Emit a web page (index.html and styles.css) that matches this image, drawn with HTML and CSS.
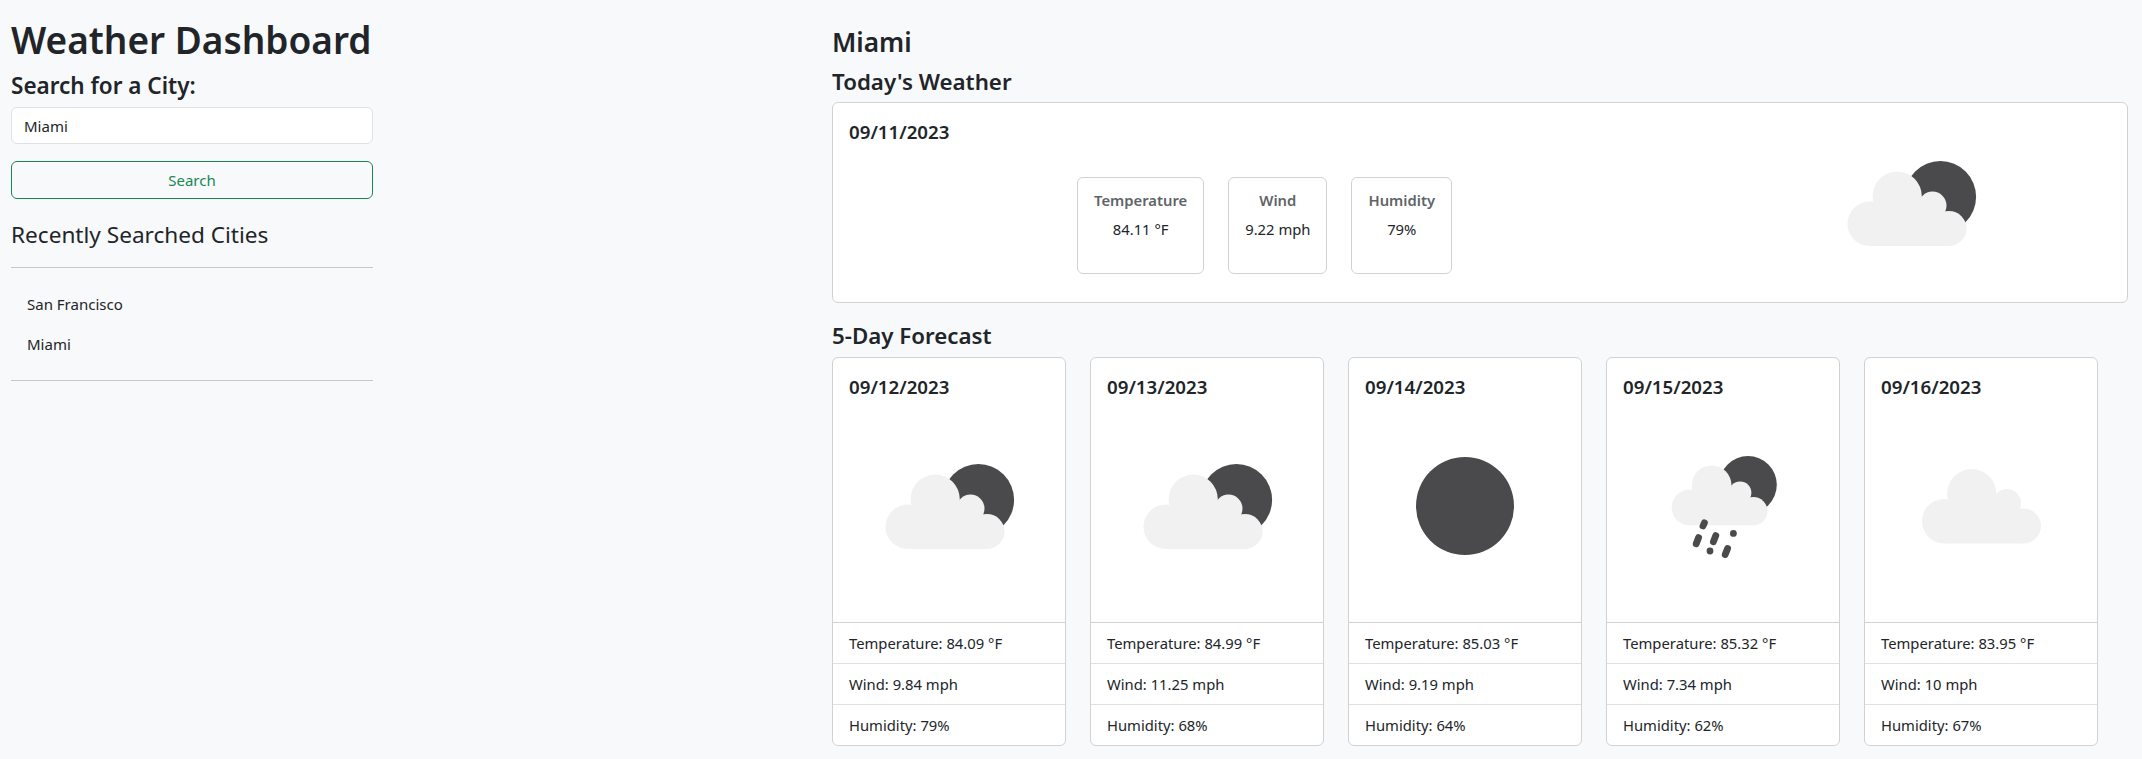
FILE: index.html
```html
<!DOCTYPE html>
<html lang="en">
<head>
<meta charset="utf-8">
<title>Weather Dashboard</title>
<link rel="stylesheet" href="styles.css">
</head>
<body>
<div class="page">
  <aside class="sidebar">
    <h1 class="app-title">Weather Dashboard</h1>
    <label class="search-label" for="city">Search for a City:</label>
    <input class="search-input" id="city" type="text" value="Miami">
    <button class="search-btn" type="button">Search</button>
    <h4 class="recent-title">Recently Searched Cities</h4>
    <hr class="rule rule-top">
    <ul class="recent-list">
      <li>San Francisco</li>
      <li>Miami</li>
    </ul>
    <hr class="rule">
  </aside>
  <main class="content">
    <h2 class="city-name">Miami</h2>
    <h4 class="section-title">Today's Weather</h4>
    <section class="today-card">
      <h5 class="today-date">09/11/2023</h5>
      <div class="stats">
        <div class="stat"><h6>Temperature</h6><p>84.11 °F</p></div>
        <div class="stat"><h6>Wind</h6><p>9.22 mph</p></div>
        <div class="stat"><h6>Humidity</h6><p>79%</p></div>
      </div>
      <svg class="icon today-icon" viewBox="0 0 100 100" aria-label="few clouds">
        <circle class="sun" cx="64.7" cy="46.9" r="17.85"/>
        <g class="cloud">
          <circle cx="43.1" cy="46.6" r="12.3"/><circle cx="29.35" cy="60.4" r="11.1"/><circle cx="60.75" cy="51.3" r="7"/><circle cx="69" cy="62.75" r="8.75"/>
          <rect x="29.35" y="51.3" width="31.4" height="20.2"/><rect x="60.5" y="56" width="8.5" height="15.5"/>
        </g>
      </svg>
    </section>
    <h4 class="section-title forecast-title">5-Day Forecast</h4>
    <div class="forecast">
      <article class="day">
        <div class="day-body">
          <h5>09/12/2023</h5>
          <svg class="icon" viewBox="0 0 100 100" aria-label="few clouds">
            <circle class="sun" cx="64.7" cy="46.9" r="17.85"/>
            <g class="cloud">
              <circle cx="43.1" cy="46.6" r="12.3"/><circle cx="29.35" cy="60.4" r="11.1"/><circle cx="60.75" cy="51.3" r="7"/><circle cx="69" cy="62.75" r="8.75"/>
              <rect x="29.35" y="51.3" width="31.4" height="20.2"/><rect x="60.5" y="56" width="8.5" height="15.5"/>
            </g>
          </svg>
        </div>
        <ul class="day-list"><li>Temperature: 84.09 °F</li><li>Wind: 9.84 mph</li><li>Humidity: 79%</li></ul>
      </article>
      <article class="day">
        <div class="day-body">
          <h5>09/13/2023</h5>
          <svg class="icon" viewBox="0 0 100 100" aria-label="few clouds">
            <circle class="sun" cx="64.7" cy="46.9" r="17.85"/>
            <g class="cloud">
              <circle cx="43.1" cy="46.6" r="12.3"/><circle cx="29.35" cy="60.4" r="11.1"/><circle cx="60.75" cy="51.3" r="7"/><circle cx="69" cy="62.75" r="8.75"/>
              <rect x="29.35" y="51.3" width="31.4" height="20.2"/><rect x="60.5" y="56" width="8.5" height="15.5"/>
            </g>
          </svg>
        </div>
        <ul class="day-list"><li>Temperature: 84.99 °F</li><li>Wind: 11.25 mph</li><li>Humidity: 68%</li></ul>
      </article>
      <article class="day">
        <div class="day-body">
          <h5>09/14/2023</h5>
          <svg class="icon" viewBox="0 0 100 100" aria-label="clear sky">
            <circle class="sun" cx="50" cy="50" r="24.5"/>
          </svg>
        </div>
        <ul class="day-list"><li>Temperature: 85.03 °F</li><li>Wind: 9.19 mph</li><li>Humidity: 64%</li></ul>
      </article>
      <article class="day">
        <div class="day-body">
          <h5>09/15/2023</h5>
          <svg class="icon" viewBox="0 0 100 100" aria-label="rain">
            <circle class="sun" cx="62.5" cy="39.4" r="14.4"/>
            <g class="cloud" transform="translate(9.66 2.09) scale(.805)">
              <circle cx="43.1" cy="46.6" r="12.3"/><circle cx="29.35" cy="60.4" r="11.1"/><circle cx="60.75" cy="51.3" r="7"/><circle cx="69" cy="62.75" r="8.75"/>
              <rect x="29.35" y="51.3" width="31.4" height="20.2"/><rect x="60.5" y="56" width="8.5" height="15.5"/>
            </g>
            <g class="rain">
              <path d="M40.7 58.4 40 60"/><path d="M37.8 65.8 36.6 68.9"/><path d="M46.4 64.8 45.2 67.9"/>
              <path d="M55.2 63.7 55.2 63.7"/><path d="M43.5 72.5 43.5 72.5"/><path d="M52.3 71.2 51.1 74.3"/>
            </g>
          </svg>
        </div>
        <ul class="day-list"><li>Temperature: 85.32 °F</li><li>Wind: 7.34 mph</li><li>Humidity: 62%</li></ul>
      </article>
      <article class="day">
        <div class="day-body">
          <h5>09/16/2023</h5>
          <svg class="icon" viewBox="0 0 100 100" aria-label="scattered clouds">
            <g class="cloud" transform="translate(2.25 -2.75)">
              <circle cx="43.1" cy="46.6" r="12.3"/><circle cx="29.35" cy="60.4" r="11.1"/><circle cx="60.75" cy="51.3" r="7"/><circle cx="69" cy="62.75" r="8.75"/>
              <rect x="29.35" y="51.3" width="31.4" height="20.2"/><rect x="60.5" y="56" width="8.5" height="15.5"/>
            </g>
          </svg>
        </div>
        <ul class="day-list"><li>Temperature: 83.95 °F</li><li>Wind: 10 mph</li><li>Humidity: 67%</li></ul>
      </article>
    </div>
  </main>
</div>
</body>
</html>
```
FILE: styles.css
```css
* { box-sizing: border-box; }
html, body { margin: 0; padding: 0; }
body {
  background: #f8f9fa;
  color: #212529;
  font-family: "Noto Sans", "Open Sans", sans-serif;
  font-size: 15px;
  line-height: 24px;
}
h1, h2, h4, h5, h6, p, ul { margin: 0; padding: 0; }
ul { list-style: none; }

.page { display: flex; padding-left: 11px; }

.sidebar { width: 362px; flex: none; padding-top: 16px; }
.app-title { font-size: 37px; font-weight: 600; line-height: 48px; }
.search-label { display: block; font-size: 22.5px; font-weight: 600; line-height: 24px; margin-top: 10px; }
.search-input {
  display: block; width: 100%; height: 37px; margin-top: 9px; padding: 0 12px;
  background: #fff; border: 1px solid #dee2e6; border-radius: 6px;
  color: #212529; font: inherit;
}
.search-btn {
  display: block; width: 100%; height: 38px; margin-top: 17px;
  background: transparent; border: 1px solid #198754; border-radius: 6px;
  color: #198754; font: inherit;
}
.recent-title { font-size: 22.6px; font-weight: 400; line-height: 29px; margin-top: 21px; }
.rule { height: 0; margin: 0; border: 0; border-top: 1px solid #c6c7c8; }
.rule-top { margin-top: 18px; }
.recent-list { padding: 16px 16px 16px; }
.recent-list li { height: 40px; line-height: 40px; font-size: 15px; }

.content { width: 1296px; flex: none; margin-left: 459px; padding-top: 25px; }
.city-name { font-size: 26.2px; font-weight: 600; line-height: 34px; }
.section-title { font-size: 22.3px; font-weight: 600; line-height: 29px; margin-top: 8px; }

.today-card {
  display: flex; align-items: flex-start; height: 201px; margin-top: 6px;
  background: #fff; border: 1px solid #d2d2d2; border-radius: 6px;
}
.today-date { width: 244px; flex: none; padding: 17px 16px; font-size: 18.7px; font-weight: 600; line-height: 24px; }
.stats { display: flex; gap: 24px; margin-top: 74px; }
.stat {
  height: 97px; padding: 8px 16px; text-align: center;
  border: 1px solid #d2d2d2; border-radius: 6px; font-size: 14.8px;
}
.stat h6 { font-size: 14.8px; font-weight: 600; line-height: 24px; color: #5f6468; margin-top: 2px; }
.stat p { line-height: 24px; margin-top: 5px; }
.icon { width: 200px; height: 200px; display: block; flex: none; }
.today-icon { margin-left: auto; margin-right: 116px; }
.sun { fill: #4a4a4c; }
.cloud { fill: #f1f1f1; }
.rain path { fill: none; stroke: #4a4a4c; stroke-width: 3.4; stroke-linecap: round; }

.forecast-title { margin-top: 18px; }
.forecast { display: flex; gap: 24px; margin-top: 7px; }
.day {
  width: 234px; background: #fff;
  border: 1px solid #d2d2d2; border-radius: 6px; flex: none;
}
.day-body { height: 265px; padding: 16px 16px 0; border-bottom: 1px solid #d2d2d2; }
.day-body h5 { font-size: 18.7px; font-weight: 600; line-height: 26px; height: 32px; }
.day-list li { height: 41px; padding: 8px 16px; font-size: 14.8px; line-height: 24px; border-bottom: 1px solid #dfe0e1; white-space: nowrap; }
.day-list li:last-child { height: 40px; border-bottom: 0; }
```
